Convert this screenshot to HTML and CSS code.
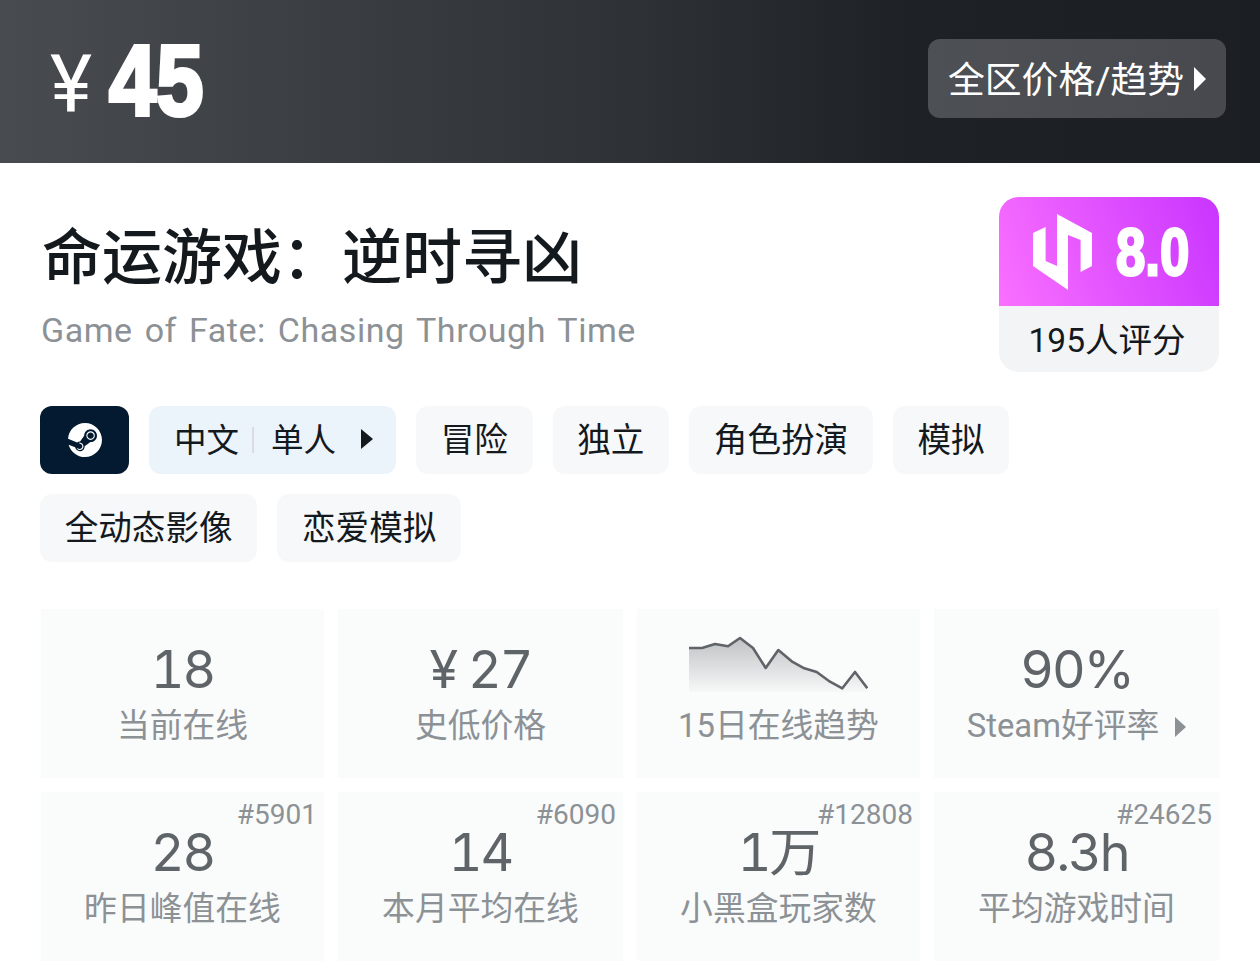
FILE: index.html
```html
<!DOCTYPE html>
<html lang="zh-CN">
<head>
    <meta charset="UTF-8">
    <meta name="viewport" content="width=device-width, initial-scale=1.0">
    <title>命运游戏&#65306;逆时寻凶</title>
    <link rel="stylesheet" href="styles.css">
</head>
<body>
    <header class="price-bar">
        <div class="price">
            <span class="price-sign">¥</span>
            <span class="price-num">45</span>
        </div>
        <div class="region-btn">全区价格/趋势<span class="arrow arrow-white"></span></div>
    </header>

    <main class="content">
        <section class="head-row">
            <div class="titles">
                <h1>命运游戏&#65306;逆时寻凶</h1>
                <p>Game of Fate: Chasing Through Time</p>
            </div>
            <div class="score-card">
                <div class="score-top">
                    <svg class="score-logo" viewBox="0 0 59 76">
                        <path d="M0 19 12.600 13V47L24 52V0L59 19V52L47.600 58V26L35 21V76L0 52Z"/>
                    </svg>
                    <span class="score-num">8.0</span>
                </div>
                <div class="score-count">195人评分</div>
            </div>
        </section>

        <section class="tags">
            <div class="tag tag-steam">
                <svg viewBox="0 0 24 24" class="steam-icon"><path d="M11.979 0C5.678 0 .511 4.86.022 11.037l6.432 2.658c.545-.371 1.203-.59 1.912-.59.063 0 .125.004.188.006l2.861-4.142V8.91c0-2.495 2.028-4.524 4.524-4.524 2.494 0 4.524 2.031 4.524 4.527s-2.03 4.525-4.524 4.525h-.105l-4.076 2.911c0 .052.004.105.004.159 0 1.875-1.515 3.396-3.39 3.396-1.635 0-3.016-1.173-3.331-2.727L.436 15.27C1.862 20.307 6.486 24 11.979 24c6.627 0 11.999-5.373 11.999-12S18.605 0 11.979 0zM7.54 18.21l-1.473-.61c.262.543.714.999 1.314 1.25 1.297.539 2.793-.076 3.332-1.375.263-.63.264-1.319.005-1.949s-.75-1.121-1.377-1.383c-.624-.26-1.29-.249-1.878-.03l1.523.63c.956.4 1.409 1.5 1.009 2.455-.397.957-1.497 1.41-2.454 1.012H7.54zm11.415-9.303c0-1.662-1.353-3.015-3.015-3.015-1.665 0-3.015 1.353-3.015 3.015 0 1.665 1.35 3.015 3.015 3.015 1.663 0 3.015-1.35 3.015-3.015zm-5.273-.005c0-1.252 1.013-2.266 2.265-2.266 1.249 0 2.266 1.014 2.266 2.266 0 1.251-1.017 2.265-2.266 2.265-1.253 0-2.265-1.014-2.265-2.265z"/></svg>
            </div>
            <div class="tag tag-lang">中文<span class="tag-sep"></span>单人<span class="arrow arrow-dark"></span></div>
            <div class="tag">冒险</div>
            <div class="tag">独立</div>
            <div class="tag">角色扮演</div>
            <div class="tag">模拟</div>
            <div class="tag">全动态影像</div>
            <div class="tag">恋爱模拟</div>
        </section>

        <section class="stats">
            <div class="stat">
                <div class="stat-value">18</div>
                <div class="stat-label">当前在线</div>
            </div>
            <div class="stat">
                <div class="stat-value">¥ 27</div>
                <div class="stat-label">史低价格</div>
            </div>
            <div class="stat">
                <svg class="trend" viewBox="0 0 180 56">
                    <defs>
                        <linearGradient id="trendFill" x1="0" y1="0" x2="0" y2="1">
                            <stop offset="0" stop-color="#5f6468" stop-opacity="0.38"/>
                            <stop offset="1" stop-color="#5f6468" stop-opacity="0.02"/>
                        </linearGradient>
                    </defs>
                    <path fill="url(#trendFill)" d="M1 12H14L27 8 40 10.300 52 2 65 12 77.700 32 90.300 14 103.700 25.300 116.300 32.300 128.700 36 142 45.700 154.300 52.300 167 36 179.300 52.300V56H1Z"/>
                    <path fill="none" stroke="#5f6468" stroke-width="2.600" stroke-linejoin="round" d="M1 12H14L27 8 40 10.300 52 2 65 12 77.700 32 90.300 14 103.700 25.300 116.300 32.300 128.700 36 142 45.700 154.300 52.300 167 36 179.300 52.300"/>
                </svg>
                <div class="stat-label">15日在线趋势</div>
            </div>
            <div class="stat">
                <div class="stat-value">90%</div>
                <div class="stat-label">Steam好评率<span class="arrow arrow-gray"></span></div>
            </div>
            <div class="stat">
                <span class="stat-rank">#5901</span>
                <div class="stat-value">28</div>
                <div class="stat-label">昨日峰值在线</div>
            </div>
            <div class="stat">
                <span class="stat-rank">#6090</span>
                <div class="stat-value">14</div>
                <div class="stat-label">本月平均在线</div>
            </div>
            <div class="stat">
                <span class="stat-rank">#12808</span>
                <div class="stat-value">1万</div>
                <div class="stat-label">小黑盒玩家数</div>
            </div>
            <div class="stat">
                <span class="stat-rank">#24625</span>
                <div class="stat-value">8.3h</div>
                <div class="stat-label">平均游戏时间</div>
            </div>
        </section>
    </main>
</body>
</html>
```

FILE: styles.css
```css
* {
    box-sizing: border-box;
}

body {
    margin: 0;
    background-color: #fff;
    color: #14191e;
    font-family: Roboto, "Noto Sans CJK SC", sans-serif;
    overflow: hidden;
}

.price-bar {
    height: 163px;
    padding: 0 34px 6px 50px;
    display: flex;
    justify-content: space-between;
    align-items: center;
    background: linear-gradient(90deg, #484c51 0%, #2e3236 50%, #1e2125 72%, #1b1e22 100%);
}

.price {
    display: flex;
    align-items: center;
    color: #fff;
}

.price-sign {
    font-size: 80px;
    font-weight: 400;
    width: 58px;
    line-height: 1;
    margin-top: 12px;
}

.price-num {
    display: inline-block;
    font-family: "Liberation Sans", sans-serif;
    font-weight: 700;
    font-size: 100px;
    line-height: 1;
    -webkit-text-stroke: 4px #fff;
    transform: scaleX(0.85);
    transform-origin: left center;
    width: 96px;
    margin-top: 3px;
    margin-left: 1px;
}

.region-btn {
    height: 79px;
    width: 298px;
    display: flex;
    align-items: center;
    padding: 0 0 4px 20px;
    border-radius: 12px;
    background: linear-gradient(90deg, #4d5055, #47494e);
    color: #fff;
    font-size: 36.800px;
}

.arrow {
    display: inline-block;
    width: 0;
    height: 0;
    border-style: solid;
    border-color: transparent;
    border-width: 9px 0 9px 11px;
}

.arrow-white {
    border-left-color: #fff;
    margin: 4px 0 0 10px;
    border-width: 12px 0 12px 12px;
}

.arrow-dark {
    border-left-color: #14191e;
    margin: 4px 0 0 25px;
    border-width: 10px 0 10px 12px;
}

.arrow-gray {
    border-left-color: #8c9196;
    margin: 2px 0 0 16px;
    border-width: 10px 0 10px 11px;
}

.content {
    padding: 34px 41px 0 40px;
}

.head-row {
    display: flex;
    justify-content: space-between;
    align-items: flex-start;
}

.titles {
    padding-top: 27px;
}

.titles h1 {
    margin: 0 0 0 2px;
    font-size: 60px;
    font-weight: 500;
    line-height: 70px;
}

.titles p {
    margin: 14px 0 0 1px;
    font-size: 34px;
    line-height: 44px;
    color: #8c9196;
    letter-spacing: 0.550px;
    word-spacing: 3px;
}

.score-card {
    width: 220px;
    height: 175px;
    border-radius: 20px;
    overflow: hidden;
    background-color: #f2f4f6;
}

.score-top {
    height: 109px;
    padding-left: 5px;
    display: flex;
    align-items: center;
    justify-content: center;
    gap: 24px;
    background: linear-gradient(70deg, #fa70ff 0%, #c935ff 100%);
}

.score-logo {
    width: 59px;
    height: 76px;
    fill: #fff;
}

.score-num {
    display: inline-block;
    width: 74px;
    font-family: "Liberation Sans", sans-serif;
    font-weight: 700;
    font-size: 66px;
    color: #fff;
    -webkit-text-stroke: 2.800px #fff;
    transform: scaleX(0.8);
    transform-origin: left center;
}

.score-count {
    height: 66px;
    padding-right: 4px;
    line-height: 70px;
    text-align: center;
    font-size: 33.500px;
}

.tags {
    margin-top: 34px;
    display: flex;
    flex-wrap: wrap;
    gap: 20px;
}

.tag {
    height: 68px;
    padding: 0 24.700px 6px;
    display: flex;
    align-items: center;
    border-radius: 12px;
    background-color: #f6f8fa;
    font-size: 33.600px;
    color: #14191e;
}

.tag-steam {
    width: 89px;
    padding: 0;
    justify-content: center;
    background-color: #031a30;
}

.steam-icon {
    width: 34px;
    height: 34px;
    fill: #fff;
}

.tag-lang {
    padding: 0 23px 6px 25px;
    font-size: 32.500px;
    background-color: #ebf3fb;
}

.tag-sep {
    width: 2px;
    height: 26px;
    margin: 6px 17px 0 13px;
    background-color: #d9dde2;
}

.stats {
    margin: 47px 0 0 1px;
    display: grid;
    grid-template-columns: 283px 285px 283px 285px;
    grid-auto-rows: 169px;
    gap: 14px;
}

.stat {
    position: relative;
    display: flex;
    flex-direction: column;
    align-items: center;
    padding-top: 30px;
    background-color: #fafbfb;
}

.stat-value {
    height: 62px;
    line-height: 62px;
    font-family: Inter, "Noto Sans CJK SC", sans-serif;
    font-variant-numeric: tabular-nums;
    font-size: 52px;
    letter-spacing: -2px;
    color: #5f6468;
}

.stat-label {
    margin-top: 3px;
    height: 44px;
    line-height: 44px;
    display: flex;
    align-items: center;
    font-size: 32.800px;
    color: #8c9196;
}

.stat-rank {
    position: absolute;
    top: 6px;
    right: 7px;
    font-size: 28px;
    color: #8c9196;
}

.trend {
    display: block;
    width: 180px;
    height: 56px;
    margin: -3px 1px 9px 0;
}
```
